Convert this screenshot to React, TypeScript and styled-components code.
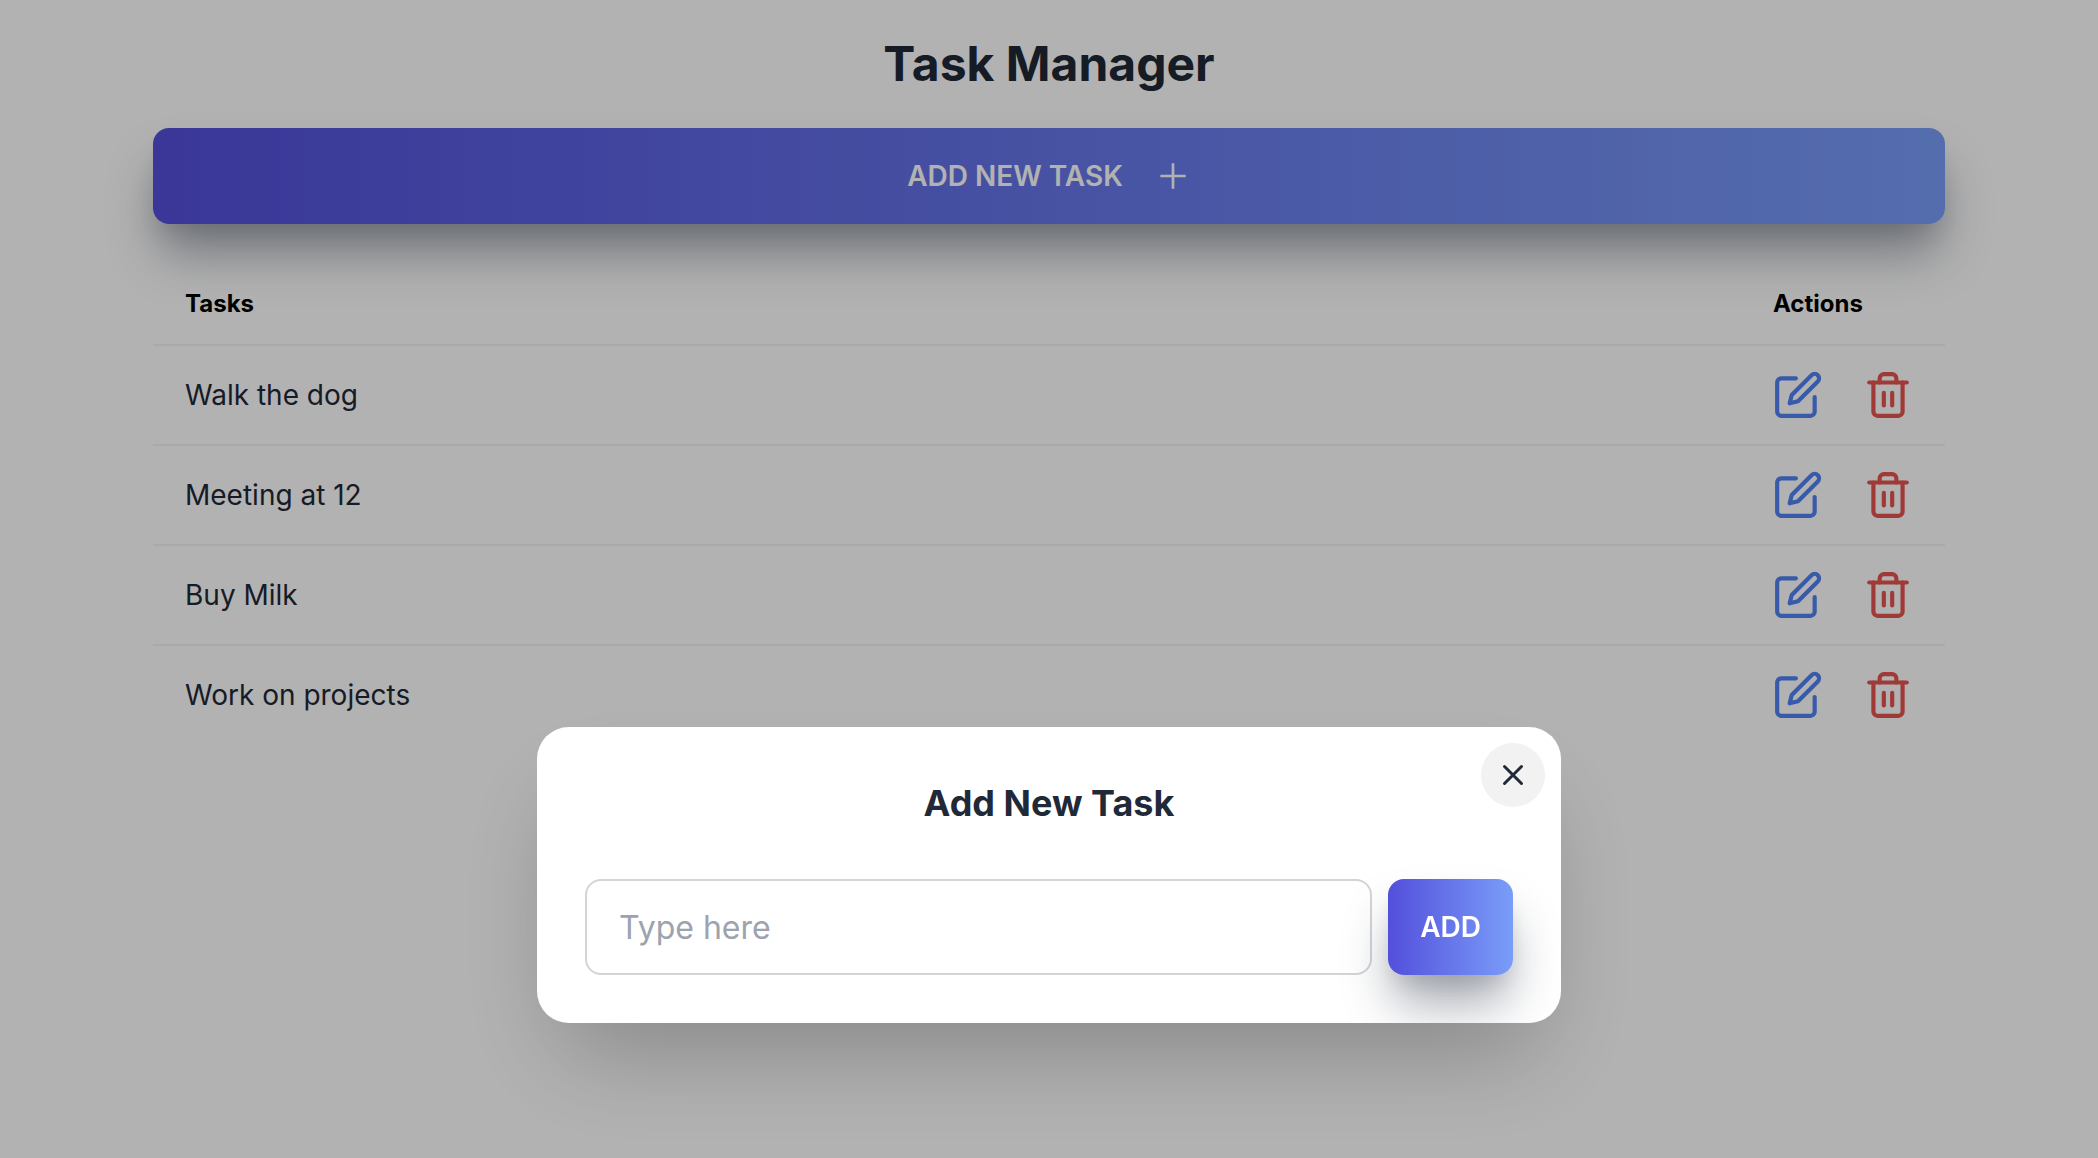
import React, { useState } from "react";
import styled, { createGlobalStyle } from "styled-components";
import { FiEdit, FiTrash2 } from "react-icons/fi";
import { AiOutlinePlus } from "react-icons/ai";

const GlobalStyle = createGlobalStyle`
  *, *::before, *::after { box-sizing: border-box; }
  body {
    margin: 0;
    background: #ffffff;
    color: #1f2937;
    font-family: Inter, "Liberation Sans", sans-serif;
    font-size: 32px;
    line-height: 48px;
  }
  button, input { font-family: inherit; }
`;

const Main = styled.main`
  max-width: 1792px;
  margin: 0 auto;
  padding-top: 32px;
  display: flex;
  flex-direction: column;
`;

const PageTitle = styled.h1`
  margin: 0 0 32px;
  font-size: 48px;
  line-height: 64px;
  font-weight: 700;
  text-align: center;
`;

const PrimaryButton = styled.button<{ $block?: boolean }>`
  display: flex;
  align-items: center;
  justify-content: center;
  gap: 32px;
  width: ${(p) => (p.$block ? "100%" : "auto")};
  height: 96px;
  padding: 0 32px;
  border: 0;
  border-radius: 16px;
  background: linear-gradient(90deg, #534fdb, #7a9df9);
  box-shadow:
    0 34px 50px -6px rgba(31, 41, 60, 0.4),
    0 14px 24px -8px rgba(31, 41, 60, 0.14);
  color: #ffffff;
  font-size: 28px;
  line-height: 28px;
  font-weight: 600;
  text-transform: uppercase;
  cursor: pointer;
`;

const TaskTable = styled.table`
  width: 100%;
  margin-top: 40px;
  border-collapse: collapse;
  text-align: left;
`;

const Row = styled.tr`
  border-bottom: 2px solid #f2f2f2;
  &:last-child { border-bottom-color: transparent; }
`;

const HeadRow = styled.tr`
  border-bottom: 2px solid #f2f2f2;
`;

const HeadCell = styled.th`
  padding: 24px 32px;
  color: #000000;
  font-size: 24px;
  line-height: 32px;
  font-weight: 700;
`;

const Cell = styled.td<{ $grow?: boolean }>`
  width: ${(p) => (p.$grow ? "100%" : "auto")};
  padding: 24px 32px;
  font-size: 28px;
  line-height: 40px;
`;

const Actions = styled.div`
  display: flex;
  gap: 40px;
`;

const IconButton = styled.button<{ $color: string }>`
  display: block;
  padding: 0;
  border: 0;
  background: none;
  color: ${(p) => p.$color};
  cursor: pointer;
  svg { display: block; width: 50px; height: 50px; }
`;

const Overlay = styled.div`
  position: fixed;
  inset: 0;
  display: flex;
  align-items: flex-end;
  justify-content: center;
  padding-bottom: 135px;
  background: rgba(0, 0, 0, 0.3);
`;

const ModalBox = styled.section`
  position: relative;
  width: 100%;
  padding: 48px;
  overflow: hidden;
  border-radius: 32px;
  background: #ffffff;
`;

const ModalShadow = styled.div`
  width: 100%;
  max-width: 1024px;
  border-radius: 32px;
  box-shadow: 0 50px 100px -24px rgba(0, 0, 0, 0.25);
`;

const CloseButton = styled.button`
  position: absolute;
  top: 16px;
  right: 16px;
  display: flex;
  align-items: center;
  justify-content: center;
  width: 64px;
  height: 64px;
  padding: 0;
  border: 0;
  border-radius: 50%;
  background: #f2f2f2;
  color: #1f2937;
  cursor: pointer;
`;

const ModalTitle = styled.h2`
  margin: 0 0 48px;
  font-size: 36px;
  line-height: 56px;
  font-weight: 700;
  text-align: center;
`;

const Form = styled.form`
  display: flex;
  gap: 16px;
`;

const TextInput = styled.input`
  flex: 1;
  min-width: 0;
  height: 96px;
  padding: 0 32px;
  border: 2px solid #d2d4d7;
  border-radius: 16px;
  background: #ffffff;
  color: #1f2937;
  font-size: 32px;
  line-height: 64px;
  &::placeholder { color: #9ca3af; opacity: 1; }
`;

const initialTasks = ["Walk the dog", "Meeting at 12", "Buy Milk", "Work on projects"];

function TaskRow({ text, onDelete }: { text: string; onDelete: () => void }) {
  return (
    <Row>
      <Cell $grow>{text}</Cell>
      <Cell>
        <Actions>
          <IconButton type="button" $color="#5082f4" aria-label={`Edit ${text}`}>
            <FiEdit />
          </IconButton>
          <IconButton type="button" $color="#e45450" aria-label={`Delete ${text}`} onClick={onDelete}>
            <FiTrash2 />
          </IconButton>
        </Actions>
      </Cell>
    </Row>
  );
}

export default function App() {
  const [tasks, setTasks] = useState(initialTasks);
  const [open, setOpen] = useState(true);
  const [draft, setDraft] = useState("");

  const submit = (event: React.FormEvent) => {
    event.preventDefault();
    if (!draft.trim()) return;
    setTasks([...tasks, draft.trim()]);
    setDraft("");
    setOpen(false);
  };

  return (
    <>
      <GlobalStyle />
      <Main>
        <PageTitle>Task Manager</PageTitle>
        <PrimaryButton type="button" $block onClick={() => setOpen(true)}>
          Add new task
          <AiOutlinePlus size={36} aria-hidden="true" />
        </PrimaryButton>
        <TaskTable>
          <thead>
            <HeadRow>
              <HeadCell scope="col">Tasks</HeadCell>
              <HeadCell scope="col">Actions</HeadCell>
            </HeadRow>
          </thead>
          <tbody>
            {tasks.map((task, index) => (
              <TaskRow
                key={`${task}-${index}`}
                text={task}
                onDelete={() => setTasks(tasks.filter((_, i) => i !== index))}
              />
            ))}
          </tbody>
        </TaskTable>
      </Main>
      {open && (
        <Overlay>
          <ModalShadow>
            <ModalBox role="dialog" aria-modal="true" aria-labelledby="modal-title">
              <CloseButton type="button" aria-label="Close" onClick={() => setOpen(false)}>
                <svg width="24" height="24" viewBox="0 0 24 24" fill="none" stroke="currentColor" strokeWidth="3" strokeLinecap="round" aria-hidden="true">
                  <path d="M3.5 3.5l17 17M20.5 3.5l-17 17" />
                </svg>
              </CloseButton>
              <ModalTitle id="modal-title">Add New Task</ModalTitle>
              <Form onSubmit={submit}>
                <TextInput
                  type="text"
                  aria-label="New task"
                  placeholder="Type here"
                  value={draft}
                  onChange={(event) => setDraft(event.target.value)}
                />
                <PrimaryButton type="submit">Add</PrimaryButton>
              </Form>
            </ModalBox>
          </ModalShadow>
        </Overlay>
      )}
    </>
  );
}
